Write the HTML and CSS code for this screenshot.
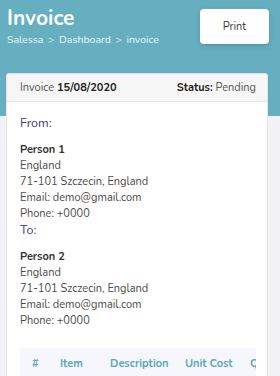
FILE: index.html
```html
<!DOCTYPE html>
<html>
<head>
<meta charset="utf-8">
<link rel="stylesheet" href="styles.css">
</head>
<body>
<div class="hero">
  <div class="hero-left">
    <h1 class="title">Invoice</h1>
    <div class="crumbs">Salessa <span class="sep">&gt;</span> Dashboard <span class="sep">&gt;</span> invoice</div>
  </div>
  <button class="print">Print</button>
</div>
<div class="main">
  <div class="card">
    <div class="card-head">
      <div>Invoice <b>15/08/2020</b></div>
      <div><b>Status:</b> Pending</div>
    </div>
    <div class="card-body">
      <div class="label">From:</div>
      <div class="addr">
        <div class="name">Person 1</div>
        <div>England</div>
        <div>71-101 Szczecin, England</div>
        <div>Email: demo@gmail.com</div>
        <div>Phone: +0000</div>
      </div>
      <div class="label">To:</div>
      <div class="addr">
        <div class="name">Person 2</div>
        <div>England</div>
        <div>71-101 Szczecin, England</div>
        <div>Email: demo@gmail.com</div>
        <div>Phone: +0000</div>
      </div>
      <div class="table-wrap">
        <div class="thead">
          <div class="th c-num">#</div>
          <div class="th c-item">Item</div>
          <div class="th c-desc">Description</div>
          <div class="th c-cost">Unit Cost</div>
          <div class="th c-qty">Quantity</div>
        </div>
      </div>
    </div>
  </div>
</div>
</body>
</html>
```
FILE: styles.css
```css
html, body {
  margin: 0;
  padding: 0;
}
body {
  width: 280px;
  height: 376px;
  overflow: hidden;
  background: #f2f2f6;
  font-family: "Nunito", Lato, "Open Sans", sans-serif;
  font-size: 11px;
  color: #444;
}
.hero {
  background: #66afc0;
  height: 116px;
  padding: 9px 11px 0 7px;
  box-sizing: border-box;
  display: flex;
  justify-content: space-between;
  align-items: flex-start;
}
.title {
  margin: -4px 0 0;
  font-size: 21px;
  line-height: 26px;
  font-weight: 700;
  color: #fff;
}
.crumbs {
  margin-top: 2px;
  color: #eef7f9;
  font-size: 10.5px;
  line-height: 14px;
}
.sep {
  margin: 0 2px;
}
.print {
  width: 69px;
  height: 35px;
  border: none;
  border-radius: 4px;
  background: #fff;
  color: #3a3a3a;
  font-family: inherit;
  font-size: 11px;
  box-shadow: 0 2px 5px rgba(0,0,0,0.15);
  padding: 0;
}
.main {
  margin-top: -43px;
  padding: 0 12px 0 6px;
}
.card {
  background: #fff;
  border: 1px solid #e4e4e8;
  border-radius: 3px;
  overflow: hidden;
}
.card-head {
  background: #f6f6f7;
  height: 27px;
  border-bottom: 1px solid #e6e6e8;
  display: flex;
  justify-content: space-between;
  align-items: center;
  padding: 0 11px 0 13px;
  color: #555;
  font-size: 11px;
}
.card-head b {
  color: #222;
  font-weight: 700;
}
.card-body {
  padding: 13px 11px 0 13px;
}
.label {
  color: #45397a;
  font-size: 12.5px;
  line-height: 16px;
}
.card-body > .label:first-child {
  margin-bottom: 11px;
}
.label + .addr {
  margin-top: 11px;
}
.addr {
  line-height: 16px;
  color: #4a4a4a;
}
.addr .name {
  font-weight: 700;
  color: #333;
}
.table-wrap {
  margin-top: 19px;
  background: #f6f7fc;
  overflow: hidden;
  height: 60px;
}
.thead {
  display: flex;
  white-space: nowrap;
  padding-top: 8px;
  line-height: 16px;
}
.th {
  color: #5aa8bc;
  font-weight: 700;
  font-size: 11px;
  flex: none;
}
.c-num { margin-left: 12px; width: 28px; }
.c-item { width: 50px; }
.c-desc { width: 75px; }
.c-cost { width: 65px; }
```
